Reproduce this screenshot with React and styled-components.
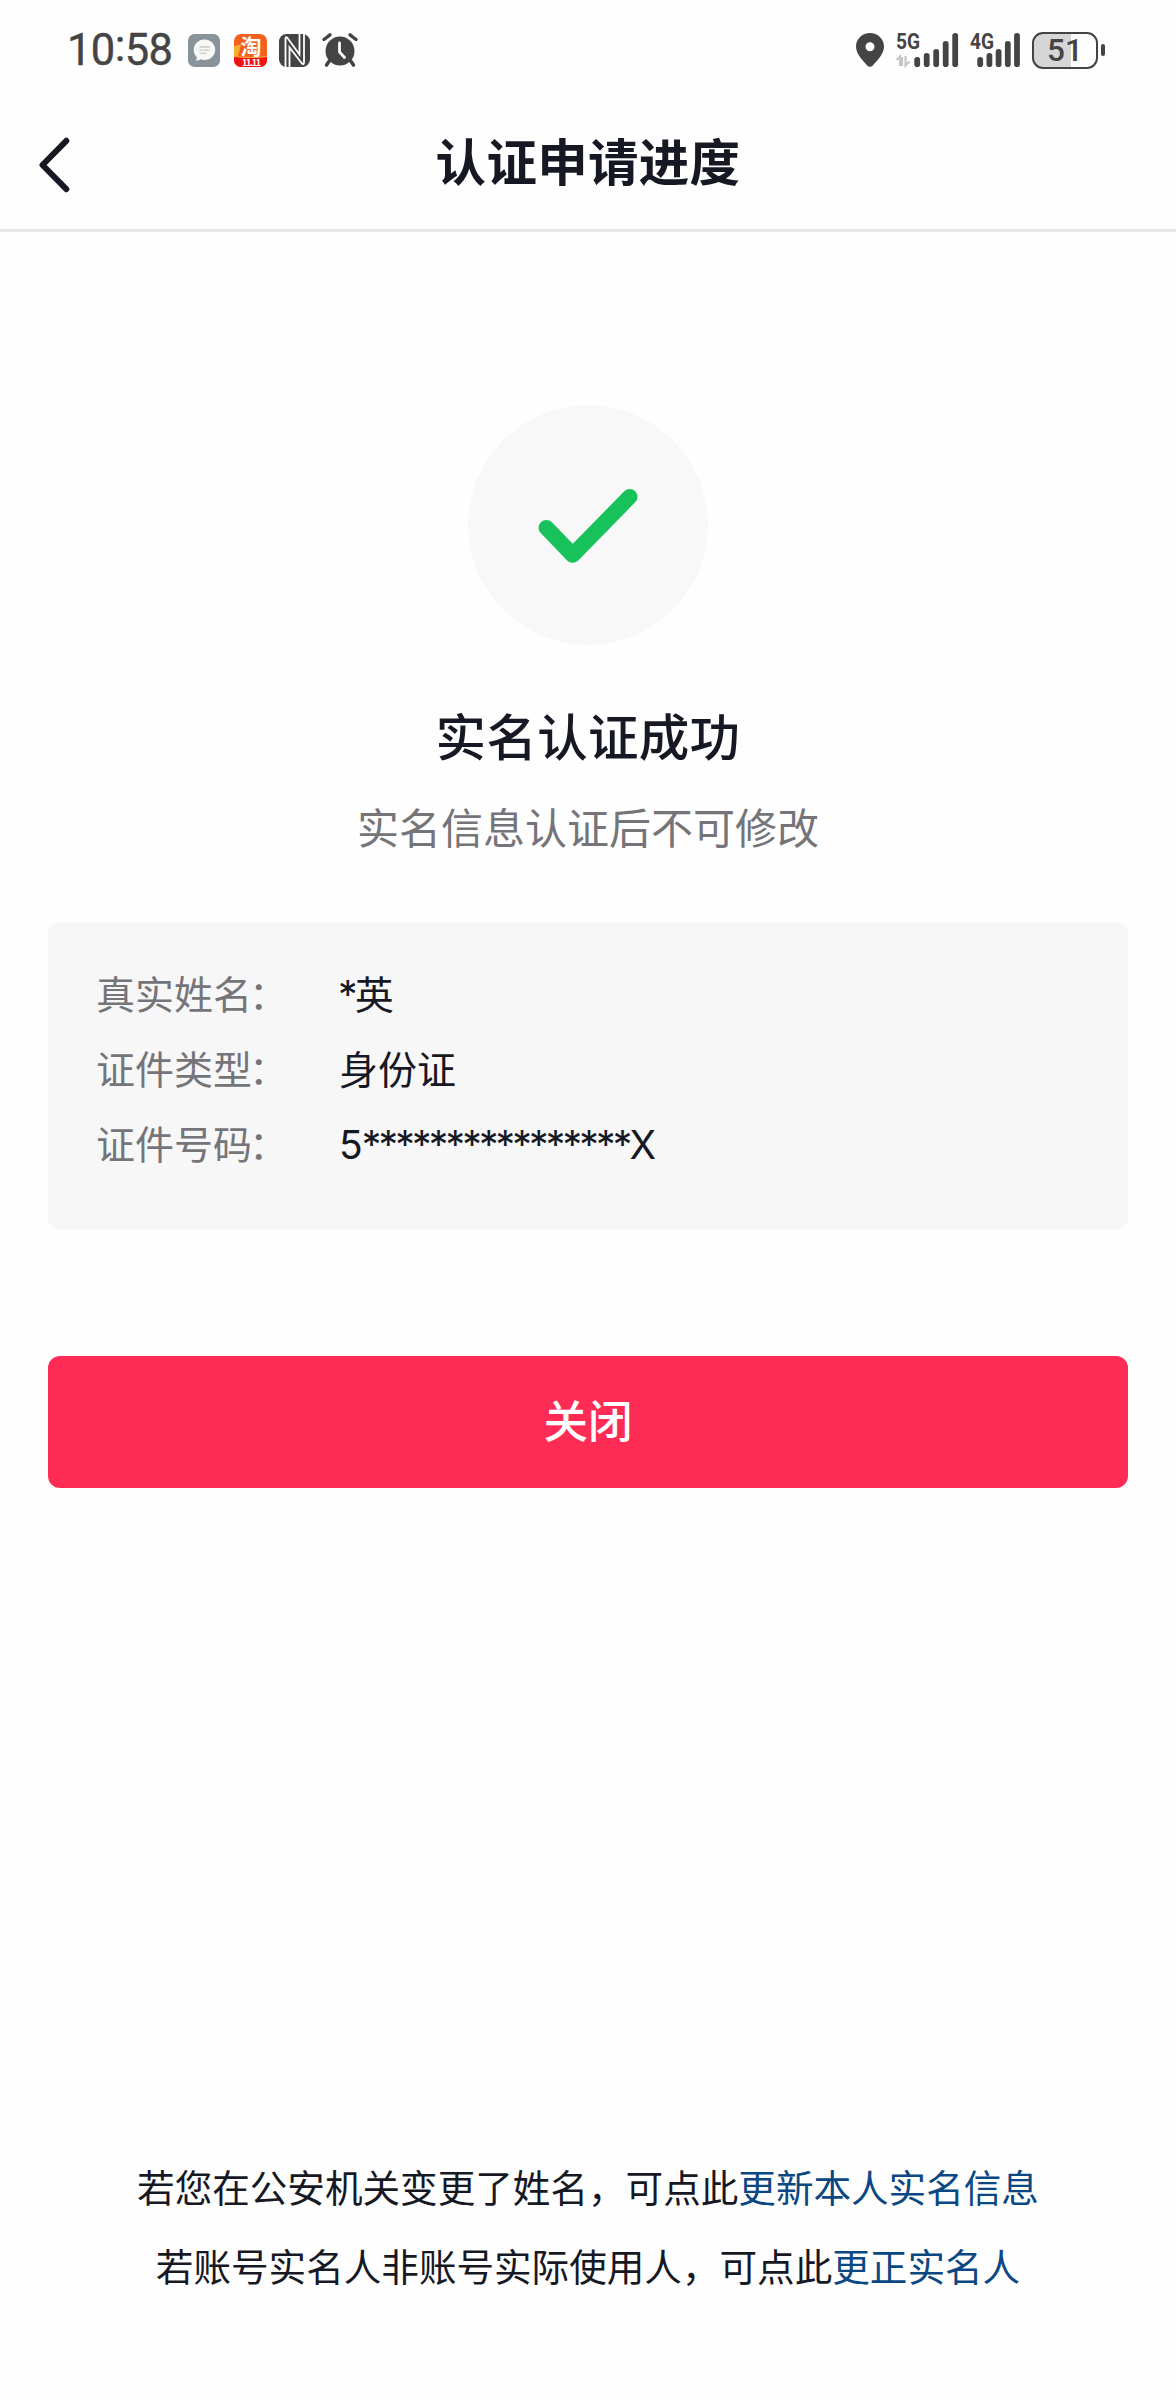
import React from 'react';
import styled, { createGlobalStyle } from 'styled-components';

const GlobalStyle = createGlobalStyle`
  * {
    box-sizing: border-box;
  }

  body {
    margin: 0;
    background: #fefefe;
    font-family: "Noto Sans CJK SC", sans-serif;
    color: #161823;
  }
`;

const details = [
  { label: '真实姓名', value: '*英' },
  { label: '证件类型', value: '身份证' },
  { label: '证件号码', value: '5****************X' },
];

const notices = [
  { text: '若您在公安机关变更了姓名，可点此', link: '更新本人实名信息' },
  { text: '若账号实名人非账号实际使用人，可点此', link: '更正实名人' },
];

const barTops = [24, 20, 16, 8, 0];

const ChatIcon = () => (
  <svg width="34" height="33" viewBox="0 0 34 33">
    <rect width="32" height="33" rx="6.5" fill="#89949a" />
    <path
      d="M16.5 5.500c6 0 10.700 4.500 10.700 10.200s-4.700 10.200-10.700 10.200c-1.400 0-2.700-.2-3.900-.7-1.300 1-3 1.400-4.900 1.400.9-1 1.200-2.200 1-3.500A10 10 0 0 1 5.800 15.700C5.800 10 10.500 5.500 16.500 5.500z"
      fill="#f8f8f6"
    />
    <path d="M11.500 13h10.500M11.500 16.200h10.500M11.500 19.400h7" stroke="#c9c9c5" strokeWidth="1.3" />
  </svg>
);

const ShopIcon = () => (
  <svg width="33" height="33" viewBox="0 0 33 33">
    <defs>
      <clipPath id="shop">
        <rect width="33" height="33" rx="7" />
      </clipPath>
    </defs>
    <g clipPath="url(#shop)">
      <rect width="33" height="33" fill="#f4611f" />
      <path d="M0 12l7-1.500-3 11.500H0z" fill="#fbb02d" />
      <path d="M0 22.500q16.500 2 33 0V33H0z" fill="#ee1414" />
      <path d="M0 22.500q16.500 2 33 0" stroke="#ffb03a" strokeWidth="1.2" fill="none" />
    </g>
    <text x="17" y="20" textAnchor="middle" fontSize="21" fontWeight="700" fill="#fff">淘</text>
    <text x="8" y="31.500" fontSize="9" fontWeight="700" fill="#fff" textLength="19">11.11</text>
  </svg>
);

const NfcIcon = () => (
  <svg width="31" height="33" viewBox="0 0 31 33">
    <rect width="31" height="33" rx="7.5" fill="#444" />
    <path d="M6.500 33V4.500Q6.500 2 8.500 4L20.500 20.500V0" fill="none" stroke="#fefefe" strokeWidth="1.8" />
    <path d="M10.500 33V13.500L22.500 29Q25 31.500 25 28.500V0" fill="none" stroke="#fefefe" strokeWidth="1.8" />
  </svg>
);

const AlarmIcon = () => (
  <svg width="36" height="34" viewBox="0 0 36 34">
    <circle cx="18" cy="18" r="14.5" fill="#444" />
    <path d="M8 27l-3.500 5M28 27l3.500 5" stroke="#444" strokeWidth="3.6" strokeLinecap="round" />
    <path d="M2 6.500L8 1.800M34 6.500L28 1.800" stroke="#444" strokeWidth="3.4" strokeLinecap="round" />
    <path d="M17.500 10v9l5 5.500" stroke="#fefefe" strokeWidth="2.8" fill="none" strokeLinecap="round" />
  </svg>
);

const PinIcon = () => (
  <svg width="28" height="34" viewBox="0 0 28 34">
    <path
      fillRule="evenodd"
      d="M14 0C6.200 0 0 6 0 13.600c0 7.400 6.800 14.200 11.200 18.900 1.600 1.700 4 1.700 5.600 0C21.200 27.800 28 21 28 13.600 28 6 21.800 0 14 0zm0 9.300a4.500 4.500 0 1 1 0 9 4.500 4.500 0 0 1 0-9z"
      fill="#444"
    />
  </svg>
);

const Signal = ({ label, width, offset, step, data }) => (
  <svg width={width} height="34" viewBox={`0 0 ${width} 34`}>
    <text x="0" y="16.3" fontSize="22" fontWeight="700" fontFamily="Roboto, sans-serif" fill="#444" textLength="24" lengthAdjust="spacingAndGlyphs">
      {label}
    </text>
    {data && (
      <path
        d="M.5 27l3.500-3.500V33M9.500 23v9.500l4-4M6 24v9"
        fill="none"
        stroke="#c6c6c6"
        strokeWidth="2.2"
      />
    )}
    {barTops.map((top, i) => (
      <rect key={top} x={offset + i * step} y={top} width="5.8" height={34 - top} rx="2.8" fill="#444" />
    ))}
  </svg>
);

const BackIcon = () => (
  <svg width="32" height="56" viewBox="0 0 32 56">
    <path d="M28.300 3.800L4.500 28l23.800 24.200" fill="none" stroke="#161823" strokeWidth="6" strokeLinecap="round" strokeLinejoin="round" />
  </svg>
);

const CheckIcon = () => (
  <svg width="240" height="240" viewBox="0 0 240 240">
    <path d="M78.300 122.700L104.700 150L161.800 91.700" fill="none" stroke="#17c25b" strokeWidth="15.5" strokeLinecap="round" strokeLinejoin="round" />
  </svg>
);

const App = () => (
  <Page lang="zh-CN">
    <GlobalStyle />
    <StatusBar>
      <StatusGroup>
        <Time>
          10<TimeColon>:</TimeColon>58
        </Time>
        <ChatIcon />
        <ShopIcon />
        <NfcIcon />
        <AlarmIcon />
      </StatusGroup>
      <StatusGroup>
        <PinIcon />
        <Signal label="5G" width={62} offset={18.3} step={9.5} data />
        <Signal label="4G" width={50} offset={7.3} step={9.2} />
        <Battery>
          <BatteryBody>51</BatteryBody>
          <BatteryTip />
        </Battery>
      </StatusGroup>
    </StatusBar>

    <Header>
      <BackButton aria-label="返回">
        <BackIcon />
      </BackButton>
      <Title>认证申请进度</Title>
    </Header>

    <Content>
      <Badge>
        <CheckIcon />
      </Badge>
      <Heading>实名认证成功</Heading>
      <Hint>实名信息认证后不可修改</Hint>

      <Card>
        {details.map(({ label, value }) => (
          <Row key={label}>
            <Label>
              {label}
              <LabelColon>：</LabelColon>
            </Label>
            <Value>
              {value.split(/(\*+)/).map((part, i) => (
                part[0] === '*' ? <Mask key={i}>{part}</Mask> : part
              ))}
            </Value>
          </Row>
        ))}
      </Card>

      <CloseButton>关闭</CloseButton>
    </Content>

    <Footer>
      {notices.map(({ text, link }) => (
        <Notice key={link}>
          {text}
          <Link>{link}</Link>
        </Notice>
      ))}
    </Footer>
  </Page>
);

const Page = styled.div`
  width: 1176px;
  height: 2400px;
  display: flex;
  flex-direction: column;
`;

const StatusBar = styled.div`
  height: 100px;
  padding: 0 71px 0 67px;
  display: flex;
  align-items: center;
  justify-content: space-between;
  color: #444;
  font-family: Roboto, "Noto Sans CJK SC", sans-serif;
`;

const StatusGroup = styled.div`
  display: flex;
  align-items: center;
  gap: 12px;

  svg {
    display: block;
    flex: none;
    overflow: visible;
    font-family: "Noto Sans CJK SC", sans-serif;
  }
`;

const Time = styled.div`
  width: 109px;
  padding-top: 2px;
  font-size: 43.5px;
  line-height: 52px;
  letter-spacing: -0.6px;
  white-space: nowrap;
  -webkit-text-stroke: 0.4px #444;
`;

const TimeColon = styled.span`
  display: inline-block;
  transform: translateY(-4px);
`;

const Battery = styled.div`
  display: flex;
  align-items: center;
  gap: 3px;
`;

const BatteryBody = styled.div`
  width: 66px;
  height: 37px;
  border: 2.5px solid #444;
  border-radius: 11px;
  background: linear-gradient(to right, #d6d6d6 60%, #fefefe 60%);
  font-size: 31.5px;
  font-weight: 500;
  line-height: 33px;
  text-align: center;
`;

const BatteryTip = styled.div`
  width: 4px;
  height: 12px;
  border-radius: 2px;
  background: #444;
`;

const Header = styled.header`
  height: 132px;
  display: grid;
  grid-template-columns: 140px 1fr 140px;
  align-items: center;
  border-bottom: 3px solid #e6e6e7;
`;

const BackButton = styled.button`
  padding: 0 0 0 38px;
  border: 0;
  background: transparent;
  text-align: left;

  svg {
    display: block;
  }
`;

const Title = styled.h1`
  margin: 0 0 11px;
  font-size: 50.5px;
  font-weight: 700;
  line-height: 72px;
  letter-spacing: 0.3px;
  text-align: center;
`;

const Content = styled.main`
  padding: 173px 48px 0;
  display: flex;
  flex-direction: column;
  align-items: center;
`;

const Badge = styled.div`
  width: 240px;
  height: 240px;
  border-radius: 50%;
  background: #f8f8f8;
`;

const Heading = styled.h2`
  margin: 53px 0 0;
  font-size: 50.5px;
  font-weight: 500;
  line-height: 72px;
  letter-spacing: 0.3px;
`;

const Hint = styled.p`
  margin: 26px 0 0;
  font-size: 42px;
  line-height: 60px;
  color: #757579;
`;

const Card = styled.div`
  width: 100%;
  height: 308px;
  margin-top: 66px;
  padding: 33px 48px;
  border-radius: 12px;
  background: #f7f7f8;
`;

const Row = styled.div`
  display: flex;
  align-items: baseline;
  height: 75px;
  font-size: 39px;
  line-height: 75px;
`;

const Label = styled.div`
  width: 243px;
  color: #757579;
`;

const LabelColon = styled.span`
  display: inline-block;
  transform: translate(-3px, 0);
`;

const Value = styled.div`
  font-family: Inter, "Noto Sans CJK SC", sans-serif;
`;

const Mask = styled.span`
  margin-left: -1px;
  letter-spacing: -2.8px;
`;

const CloseButton = styled.button`
  width: 100%;
  height: 132px;
  margin-top: 126px;
  padding: 0 0 8px;
  border: 0;
  border-radius: 12px;
  background: #fe2c55;
  color: #fff;
  font-family: inherit;
  font-size: 44.5px;
  font-weight: 500;
`;

const Footer = styled.footer`
  margin-top: auto;
  padding-bottom: 96px;
`;

const Notice = styled.p`
  margin: 0;
  font-size: 37.6px;
  line-height: 79px;
  text-align: center;
`;

const Link = styled.a`
  color: #0b4782;
`;

export default App;
